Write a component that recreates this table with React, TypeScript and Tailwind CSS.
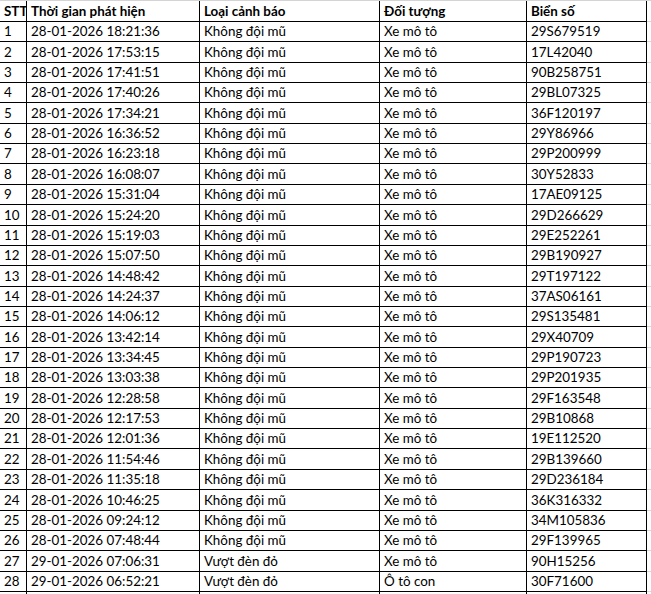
const rows: [string, string, string, string][] = [
  ["28-01-2026 18:21:36", "Không đội mũ", "Xe mô tô", "29S679519"],
  ["28-01-2026 17:53:15", "Không đội mũ", "Xe mô tô", "17L42040"],
  ["28-01-2026 17:41:51", "Không đội mũ", "Xe mô tô", "90B258751"],
  ["28-01-2026 17:40:26", "Không đội mũ", "Xe mô tô", "29BL07325"],
  ["28-01-2026 17:34:21", "Không đội mũ", "Xe mô tô", "36F120197"],
  ["28-01-2026 16:36:52", "Không đội mũ", "Xe mô tô", "29Y86966"],
  ["28-01-2026 16:23:18", "Không đội mũ", "Xe mô tô", "29P200999"],
  ["28-01-2026 16:08:07", "Không đội mũ", "Xe mô tô", "30Y52833"],
  ["28-01-2026 15:31:04", "Không đội mũ", "Xe mô tô", "17AE09125"],
  ["28-01-2026 15:24:20", "Không đội mũ", "Xe mô tô", "29D266629"],
  ["28-01-2026 15:19:03", "Không đội mũ", "Xe mô tô", "29E252261"],
  ["28-01-2026 15:07:50", "Không đội mũ", "Xe mô tô", "29B190927"],
  ["28-01-2026 14:48:42", "Không đội mũ", "Xe mô tô", "29T197122"],
  ["28-01-2026 14:24:37", "Không đội mũ", "Xe mô tô", "37AS06161"],
  ["28-01-2026 14:06:12", "Không đội mũ", "Xe mô tô", "29S135481"],
  ["28-01-2026 13:42:14", "Không đội mũ", "Xe mô tô", "29X40709"],
  ["28-01-2026 13:34:45", "Không đội mũ", "Xe mô tô", "29P190723"],
  ["28-01-2026 13:03:38", "Không đội mũ", "Xe mô tô", "29P201935"],
  ["28-01-2026 12:28:58", "Không đội mũ", "Xe mô tô", "29F163548"],
  ["28-01-2026 12:17:53", "Không đội mũ", "Xe mô tô", "29B10868"],
  ["28-01-2026 12:01:36", "Không đội mũ", "Xe mô tô", "19E112520"],
  ["28-01-2026 11:54:46", "Không đội mũ", "Xe mô tô", "29B139660"],
  ["28-01-2026 11:35:18", "Không đội mũ", "Xe mô tô", "29D236184"],
  ["28-01-2026 10:46:25", "Không đội mũ", "Xe mô tô", "36K316332"],
  ["28-01-2026 09:24:12", "Không đội mũ", "Xe mô tô", "34M105836"],
  ["28-01-2026 07:48:44", "Không đội mũ", "Xe mô tô", "29F139965"],
  ["29-01-2026 07:06:31", "Vượt đèn đỏ", "Xe mô tô", "90H15256"],
  ["29-01-2026 06:52:21", "Vượt đèn đỏ", "Ô tô con", "30F71600"],
]

const PITCH = 20.357

// excel rows are ~20.36px apart, so mix 20 and 21
const rowHeight = (i: number) =>
  Math.round((i + 1) * PITCH) - Math.round(i * PITCH) === 21 ? "h-[21px]" : "h-[20px]"

const cols = "grid grid-cols-[27px_173px_180px_147px_120px_4px]"
const cell = "border-r border-b border-black flex items-end pb-[3px] pl-[4px] whitespace-nowrap overflow-hidden"
const pad = "border-b border-[#d9d9d9]"

export default function App() {
  return (
    <div className="h-[594px] w-[651px] overflow-hidden bg-white text-black font-['Lato','Liberation_Sans',sans-serif] text-[13.4px] leading-none">
      <div className="border-t border-[#d4d4d4]">
        <div className={`${cols} h-[21px] font-bold`}>
          <div className={`${cell} pl-[3px]`}>STT</div>
          <div className={cell}>Thời gian phát hiện</div>
          <div className={cell}>Loại cảnh báo</div>
          <div className={cell}>Đối tượng</div>
          <div className={cell}>Biển số</div>
          <div className={pad} />
        </div>

        {rows.map((r, i) => (
          <div key={i} className={`${cols} ${rowHeight(i)}`}>
            <div className={`${cell} pl-[3px]`}>{i + 1}</div>
            <div className={cell}>{r[0]}</div>
            <div className={cell}>{r[1]}</div>
            <div className={cell}>{r[2]}</div>
            <div className={cell}>{r[3]}</div>
            <div className={pad} />
          </div>
        ))}

        <div className={`${cols} h-[20px]`}>
          <div className={cell} />
          <div className={cell} />
          <div className={cell} />
          <div className={cell} />
          <div className={cell} />
          <div className={pad} />
        </div>
      </div>
    </div>
  )
}
